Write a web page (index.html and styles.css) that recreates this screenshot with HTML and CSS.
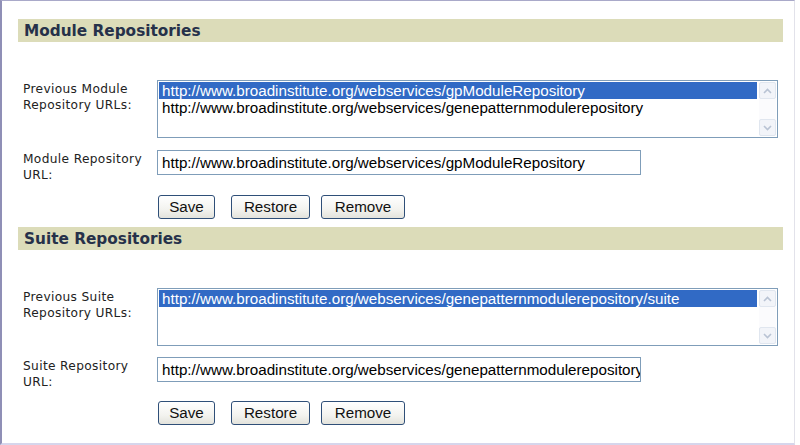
FILE: index.html
```html
<!DOCTYPE html>
<html>
<head>
<meta charset="utf-8">
<link rel="stylesheet" href="styles.css">
</head>
<body>
<div class="frame">
  <section class="sec sec-module">
    <h2 class="bar">Module Repositories</h2>
    <div class="row row-list">
      <div class="label">Previous Module<br>Repository URLs:</div>
      <div class="listbox">
        <div class="items">
          <div class="item selected">http://www.broadinstitute.org/webservices/gpModuleRepository</div>
          <div class="item">http://www.broadinstitute.org/webservices/genepatternmodulerepository</div>
        </div>
        <div class="scroll">
          <div class="sbtn"><svg width="9" height="6" viewBox="0 0 9 6"><path d="M1 5 L4.5 1.5 L8 5" fill="none" stroke="#b9c3d4" stroke-width="1.6"/></svg></div>
          <div class="sbtn"><svg width="9" height="6" viewBox="0 0 9 6"><path d="M1 1 L4.5 4.5 L8 1" fill="none" stroke="#b9c3d4" stroke-width="1.6"/></svg></div>
        </div>
      </div>
    </div>
    <div class="row row-input">
      <div class="label">Module Repository<br>URL:</div>
      <div class="textbox">http://www.broadinstitute.org/webservices/gpModuleRepository</div>
    </div>
    <div class="buttons">
      <button class="btn btn-save">Save</button>
      <button class="btn btn-restore">Restore</button>
      <button class="btn btn-remove">Remove</button>
    </div>
  </section>
  <section class="sec sec-suite">
    <h2 class="bar">Suite Repositories</h2>
    <div class="row row-list">
      <div class="label">Previous Suite<br>Repository URLs:</div>
      <div class="listbox">
        <div class="items">
          <div class="item selected">http://www.broadinstitute.org/webservices/genepatternmodulerepository/suite</div>
        </div>
        <div class="scroll">
          <div class="sbtn"><svg width="9" height="6" viewBox="0 0 9 6"><path d="M1 5 L4.5 1.5 L8 5" fill="none" stroke="#b9c3d4" stroke-width="1.6"/></svg></div>
          <div class="sbtn"><svg width="9" height="6" viewBox="0 0 9 6"><path d="M1 1 L4.5 4.5 L8 1" fill="none" stroke="#b9c3d4" stroke-width="1.6"/></svg></div>
        </div>
      </div>
    </div>
    <div class="row row-input">
      <div class="label">Suite Repository<br>URL:</div>
      <div class="textbox">http://www.broadinstitute.org/webservices/genepatternmodulerepository</div>
    </div>
    <div class="buttons">
      <button class="btn btn-save">Save</button>
      <button class="btn btn-restore">Restore</button>
      <button class="btn btn-remove">Remove</button>
    </div>
  </section>
</div>
</body>
</html>
```

FILE: styles.css
```css
html, body {
  margin: 0;
  padding: 0;
  background: #ffffff;
}

.frame {
  box-sizing: border-box;
  width: 795px;
  height: 445px;
  border-left: 2px solid #8f8fb6;
  border-top: 1px solid #a9a9c9;
  border-right: 1px solid #e2e2ea;
  border-bottom: 2px solid #d6d6ec;
  padding: 18px 0 0 16px;
  font-family: "Liberation Sans", Arial, sans-serif;
}

.bar {
  margin: 0;
  width: 765px;
  height: 23px;
  box-sizing: border-box;
  padding-left: 6px;
  background: #dcdcb9;
  color: #26314a;
  font-family: "DejaVu Sans", Verdana, sans-serif;
  font-weight: bold;
  font-size: 15.3px;
  line-height: 24px;
}

.row {
  display: flex;
  align-items: flex-start;
  padding-left: 5px;
}

.row-list {
  margin-top: 38px;
}

.row-input {
  margin-top: 12px;
}

.sec-suite .row-input {
  margin-top: 11px;
}

.label {
  width: 134px;
  flex: none;
  font-family: "DejaVu Sans", Verdana, sans-serif;
  font-size: 12.2px;
  line-height: 16px;
  letter-spacing: 0.35px;
  color: #222222;
  padding-top: 1px;
  padding-bottom: 1px;
}

.listbox {
  box-sizing: border-box;
  width: 621px;
  height: 58px;
  border: 1px solid #7f9db9;
  display: flex;
  padding: 1px;
}

.items {
  flex: 1;
  min-width: 0;
}

.item {
  height: 17px;
  line-height: 17px;
  font-size: 15.2px;
  padding-left: 3px;
  color: #000;
  white-space: nowrap;
}

.item.selected {
  background: #316ac5;
  color: #ffffff;
}

.scroll {
  width: 17px;
  margin-left: 2px;
  display: flex;
  flex-direction: column;
  justify-content: space-between;
  background: #fbfbfd;
}

.sbtn {
  box-sizing: border-box;
  height: 17px;
  border: 1px solid #e0e6ef;
  border-radius: 2px;
  background: #f2f4f9;
  display: flex;
  align-items: center;
  justify-content: center;
}

.textbox {
  box-sizing: border-box;
  width: 484px;
  height: 25px;
  border: 1px solid #7f9db9;
  font-size: 15.2px;
  line-height: 23px;
  padding-left: 4px;
  white-space: nowrap;
  overflow: hidden;
  color: #000;
}

.buttons {
  display: flex;
  margin-top: 11px;
  padding-left: 140px;
  margin-bottom: 8px;
}

.sec-suite .buttons {
  margin-top: 10px;
}

.btn {
  box-sizing: border-box;
  height: 24px;
  border: 1px solid #2f4f78;
  border-radius: 3px;
  background: linear-gradient(#ffffff, #f3f3ef 60%, #e3e3dc);
  font-family: "Liberation Sans", Arial, sans-serif;
  font-size: 15.2px;
  color: #111;
  padding: 0;
  line-height: 22px;
}

.btn-save {
  width: 57px;
  margin-right: 16px;
}

.btn-restore {
  width: 79px;
  margin-right: 11px;
}

.btn-remove {
  width: 84px;
}
```
